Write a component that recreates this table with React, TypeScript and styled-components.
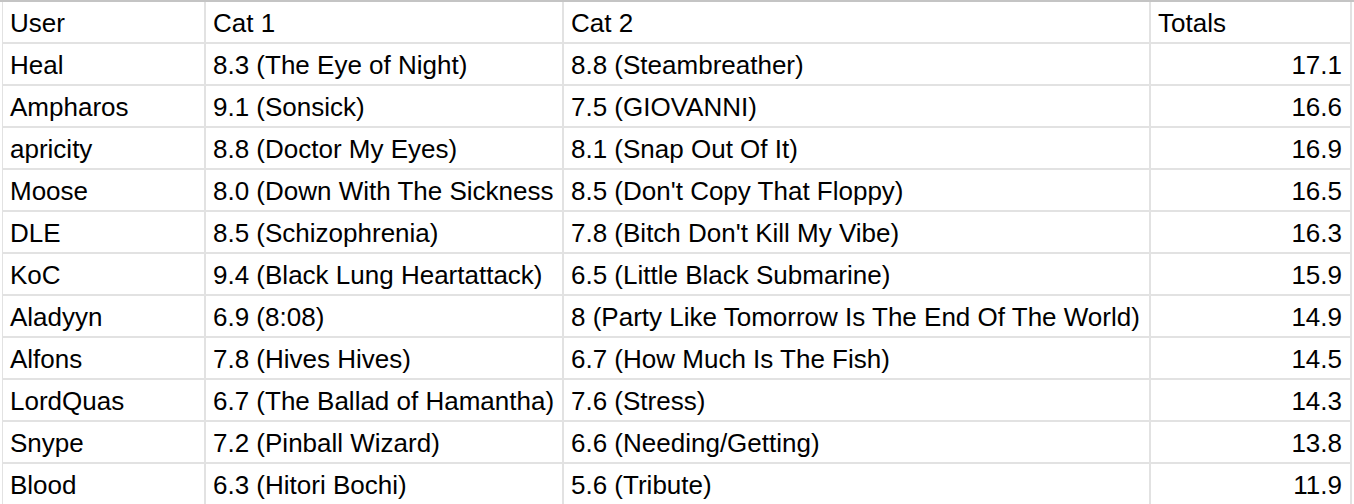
import React from "react";
import styled, { createGlobalStyle } from "styled-components";

const GlobalStyle = createGlobalStyle`
  html, body {
    margin: 0;
    padding: 0;
    background: #ffffff;
  }
  body {
    font-family: "Liberation Sans", Arial, sans-serif;
  }
`;

const Page = styled.div`
  width: 1354px;
  height: 504px;
  overflow: hidden;
  background: #ffffff;
  border-top: 2px solid #c4c4c4;
  box-sizing: border-box;
`;

const Sheet = styled.div`
  display: grid;
  grid-template-columns: 201px 356px 585px 199px;
  grid-auto-rows: 40px;
  gap: 2px;
  width: max-content;
  margin-left: 2px;
  padding-left: 1px;
  padding-right: 2px;
  background: #e2e2e2;
`;

const Cell = styled.div<{ $align?: "left" | "right" }>`
  background: #ffffff;
  display: flex;
  align-items: flex-end;
  justify-content: ${(p) => (p.$align === "right" ? "flex-end" : "flex-start")};
  padding: 0 ${(p) => (p.$align === "right" ? "8px" : "4px")} 4px
    ${(p) => (p.$align === "right" ? "0" : "7px")};
  box-sizing: border-box;
  font-size: 26px;
  line-height: 30px;
  color: #000000;
  white-space: nowrap;
  overflow: hidden;
`;

const CellText = styled.span`
  display: block;
  min-width: 0;
`;

const rows: [string, string, string, string][] = [
  ["Heal", "8.3 (The Eye of Night)", "8.8 (Steambreather)", "17.1"],
  ["Ampharos", "9.1 (Sonsick)", "7.5 (GIOVANNI)", "16.6"],
  ["apricity", "8.8 (Doctor My Eyes)", "8.1 (Snap Out Of It)", "16.9"],
  ["Moose", "8.0 (Down With The Sickness", "8.5 (Don't Copy That Floppy)", "16.5"],
  ["DLE", "8.5 (Schizophrenia)", "7.8 (Bitch Don't Kill My Vibe)", "16.3"],
  ["KoC", "9.4 (Black Lung Heartattack)", "6.5 (Little Black Submarine)", "15.9"],
  ["Aladyyn", "6.9 (8:08)", "8 (Party Like Tomorrow Is The End Of The World)", "14.9"],
  ["Alfons", "7.8 (Hives Hives)", "6.7 (How Much Is The Fish)", "14.5"],
  ["LordQuas", "6.7 (The Ballad of Hamantha)", "7.6 (Stress)", "14.3"],
  ["Snype", "7.2 (Pinball Wizard)", "6.6 (Needing/Getting)", "13.8"],
  ["Blood", "6.3 (Hitori Bochi)", "5.6 (Tribute)", "11.9"],
];

export default function App() {
  return (
    <>
      <GlobalStyle />
      <Page>
        <Sheet>
          <Cell><CellText>User</CellText></Cell>
          <Cell><CellText>Cat 1</CellText></Cell>
          <Cell><CellText>Cat 2</CellText></Cell>
          <Cell><CellText>Totals</CellText></Cell>
          {rows.map((r) => (
            <React.Fragment key={r[0]}>
              <Cell><CellText>{r[0]}</CellText></Cell>
              <Cell><CellText>{r[1]}</CellText></Cell>
              <Cell><CellText>{r[2]}</CellText></Cell>
              <Cell $align="right"><CellText>{r[3]}</CellText></Cell>
            </React.Fragment>
          ))}
        </Sheet>
      </Page>
    </>
  );
}
